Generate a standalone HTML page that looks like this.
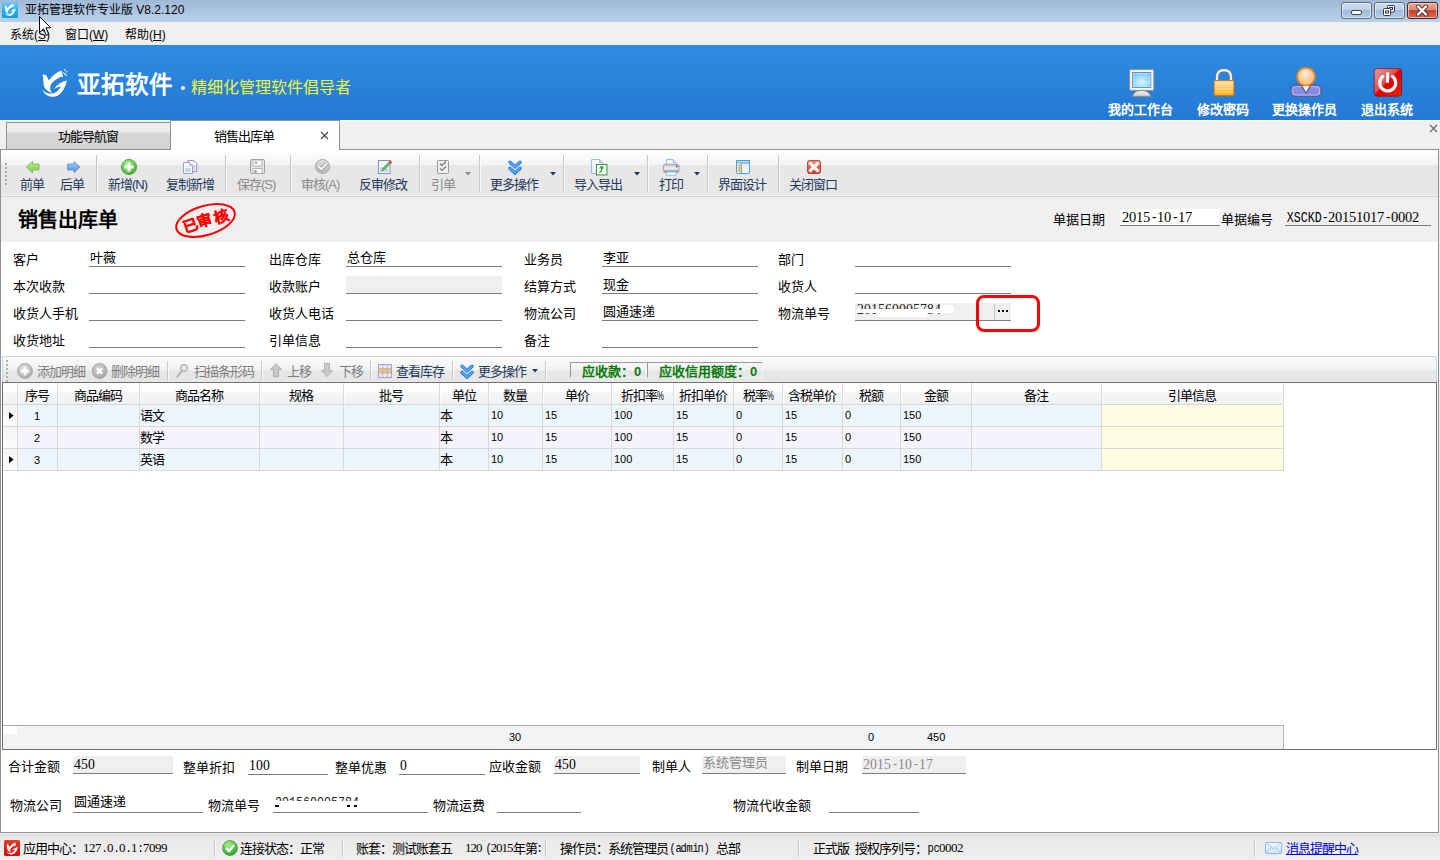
<!DOCTYPE html>
<html lang="zh-CN"><head><meta charset="utf-8">
<style>
*{margin:0;padding:0;box-sizing:border-box}
html,body{width:1440px;height:860px;overflow:hidden;background:#f0f0f0;font-family:"Liberation Sans",sans-serif;color:#000}
.a{position:absolute}
.t{position:absolute;white-space:nowrap}
.m{font-family:"Liberation Mono",monospace}
svg{overflow:visible}
</style></head><body>
<div class="a" style="left:0px;top:0px;width:1440px;height:22px;background:linear-gradient(#9fb9d7,#b9d2ea)"></div>
<svg class="a" style="left:2px;top:2px" width="16" height="16" viewBox="0 0 16 16"><defs><linearGradient id="ti" x1="0" y1="0" x2="0" y2="1"><stop offset="0" stop-color="#6cc8f4"/><stop offset=".5" stop-color="#29aef0"/><stop offset="1" stop-color="#0aa2e6"/></linearGradient></defs><rect width="16" height="16" rx="1.5" fill="url(#ti)"/><g fill="#fff" transform="translate(0.5,-1.2) scale(0.46)"><path d="M4.6,11 C6,10 7.5,10.3 8.6,12 L11,16.5 C14,12 18,8.5 23.5,6.6 L24.6,12.6 C19,14 14.5,17.5 12.6,21.5 C11.6,24 12,27 14.5,28.6 C10,28.2 6.2,25 5.6,20 C5.2,16 5.2,13 4.6,11 Z"/><path d="M4.2,25 C6,30 10,32.8 15,32.8 C21,32.8 26.5,27 28.9,16.5 C24,17.5 19,20.5 15.8,25.2 C19,23 21.2,22.3 22.8,22.4 C21,26.5 17,29.6 12.5,29.6 C9,29.6 6,28 4.2,25 Z"/></g></svg>
<div class="t" style="left:25px;top:4px;font-size:12.001px;line-height:12.001px;">亚拓管理软件专业版 V8.2.120</div>
<div class="a" style="left:1341px;top:2px;width:31px;height:17px;border:1px solid #5e6c80;border-radius:3px;background:linear-gradient(#c8d9ec 0%,#bcd0e8 45%,#9fbad8 50%,#b2cbe6 100%);box-shadow:inset 0 0 0 1px rgba(255,255,255,.55)"></div>
<div class="a" style="left:1374px;top:2px;width:31px;height:17px;border:1px solid #5e6c80;border-radius:3px;background:linear-gradient(#c8d9ec 0%,#bcd0e8 45%,#9fbad8 50%,#b2cbe6 100%);box-shadow:inset 0 0 0 1px rgba(255,255,255,.55)"></div>
<div class="a" style="left:1407px;top:2px;width:31px;height:17px;border:1px solid #5a1a1a;border-radius:3px;background:linear-gradient(#e8a698 0%,#d98a78 45%,#c2442a 50%,#d06a50 100%);box-shadow:inset 0 0 0 1px rgba(255,255,255,.55)"></div>
<div class="a" style="left:1351px;top:10px;width:11px;height:5px;background:#fff;border:1px solid #3a4556;border-radius:2px"></div>
<svg class="a" style="left:1383px;top:5px" width="12" height="11" viewBox="0 0 12 11"><rect x="4.5" y="0.5" width="7" height="6.5" rx="1" fill="#fff" stroke="#2f3846"/><rect x="6.5" y="2.5" width="3" height="2" fill="none" stroke="#2f3846"/><rect x="0.5" y="3.5" width="7" height="7" rx="1" fill="#fff" stroke="#2f3846"/><rect x="2.5" y="6" width="3" height="2" fill="none" stroke="#2f3846"/></svg>
<svg class="a" style="left:1416px;top:5px" width="12" height="11" viewBox="0 0 12 11"><path d="M2 1.5 L10 9.5 M10 1.5 L2 9.5" stroke="#4a3030" stroke-width="4" stroke-linecap="round"/><path d="M2 1.5 L10 9.5 M10 1.5 L2 9.5" stroke="#fff" stroke-width="2.4" stroke-linecap="round"/></svg>
<div class="t" style="left:10px;top:29px;font-size:12.001px;line-height:12.001px;">系统(<u>S</u>)</div>
<div class="t" style="left:65px;top:29px;font-size:12.001px;line-height:12.001px;">窗口(<u>W</u>)</div>
<div class="t" style="left:125px;top:29px;font-size:12.001px;line-height:12.001px;">帮助(<u>H</u>)</div>
<div class="a" style="left:0px;top:45px;width:1440px;height:75px;background:linear-gradient(#2e8ce0,#2479d4)"></div>
<svg class="a" style="left:38px;top:64px" width="36" height="36" viewBox="0 0 36 36"><g fill="#fff">
<path d="M4.6,11 C6,10 7.5,10.3 8.6,12 L11,16.5 C14,12 18,8.5 23.5,6.6 L24.6,12.6 C19,14 14.5,17.5 12.6,21.5 C11.6,24 12,27 14.5,28.6 C10,28.2 6.2,25 5.6,20 C5.2,16 5.2,13 4.6,11 Z"/>
<path d="M4.2,25 C6,30 10,32.8 15,32.8 C21,32.8 26.5,27 28.9,16.5 C24,17.5 19,20.5 15.8,25.2 C19,23 21.2,22.3 22.8,22.4 C21,26.5 17,29.6 12.5,29.6 C9,29.6 6,28 4.2,25 Z"/>
<circle cx="26.8" cy="5.9" r=".8"/><circle cx="28.5" cy="7.7" r=".8"/><circle cx="25.1" cy="9" r=".8"/><circle cx="26.8" cy="9.9" r=".8"/><circle cx="28" cy="11.1" r=".8"/><circle cx="24.3" cy="12.3" r=".8"/>
</g></svg>
<div class="t" style="left:77px;top:74px;font-size:23.5px;line-height:23.5px;color:#fff;font-weight:bold;letter-spacing:1px">亚拓软件</div>
<div class="a" style="left:181px;top:86px;width:4px;height:4px;background:#fff;border-radius:2px"></div>
<div class="t" style="left:191px;top:80px;font-size:16px;line-height:16px;color:#f0f53c;font-weight:500">精细化管理软件倡导者</div>
<svg class="a" style="left:1124px;top:64px" width="36" height="36" viewBox="0 0 36 36"><defs><radialGradient id="scr" cx=".5" cy=".65" r=".7"><stop offset="0" stop-color="#d8f6ff"/><stop offset="1" stop-color="#7cc8f4"/></radialGradient>
<linearGradient id="stand" x1="0" y1="0" x2="0" y2="1"><stop offset="0" stop-color="#fafafa"/><stop offset="1" stop-color="#c8c8c8"/></linearGradient></defs>
<path d="M8.6,32.4 C9.5,28.5 13,26.6 17.6,26.6 C22.2,26.6 25.7,28.5 26.6,32.4 Z" fill="url(#stand)" stroke="#8a8a8a" stroke-width=".8"/>
<rect x="5.6" y="5.6" width="24.2" height="20.8" rx="1.2" fill="#f4f4f4" stroke="#8e8e8e" stroke-width=".9"/>
<rect x="8" y="8.2" width="19.2" height="15.6" fill="#2a78b8"/>
<rect x="9" y="9.4" width="17.2" height="13.4" fill="url(#scr)" stroke="#e8f8ff" stroke-width=".6"/></svg>
<svg class="a" style="left:1206px;top:64px" width="36" height="36" viewBox="0 0 36 36"><defs><linearGradient id="lk" x1="0" y1="0" x2="0" y2="1"><stop offset="0" stop-color="#ffe0a0"/><stop offset=".5" stop-color="#ffc860"/><stop offset="1" stop-color="#ffa818"/></linearGradient></defs>
<path d="M11,17 L11,13.5 C11,8.5 13.8,6.2 18,6.2 C22.2,6.2 25,8.5 25,13.5 L25,17" fill="none" stroke="#7a7a7a" stroke-width="3.6"/>
<path d="M11,17 L11,13.5 C11,8.5 13.8,6.2 18,6.2 C22.2,6.2 25,8.5 25,13.5 L25,17" fill="none" stroke="#eeeeee" stroke-width="2.2"/>
<rect x="8" y="16.6" width="20" height="15.2" rx=".8" fill="url(#lk)" stroke="#c46a1e" stroke-width=".9"/>
<g stroke="#fff2c8" stroke-width=".6" opacity=".8"><line x1="9" y1="19" x2="27" y2="19"/><line x1="9" y1="22" x2="27" y2="22"/><line x1="9" y1="25" x2="27" y2="25"/><line x1="9" y1="28" x2="27" y2="28"/></g></svg>
<svg class="a" style="left:1288px;top:64px" width="36" height="36" viewBox="0 0 36 36"><defs><radialGradient id="hd" cx=".45" cy=".35" r=".7"><stop offset="0" stop-color="#fff4e8"/><stop offset=".5" stop-color="#ffcc98"/><stop offset="1" stop-color="#ffc080"/></radialGradient></defs>
<rect x="3" y="21.2" width="30.2" height="11" rx="4" fill="#8a8ae4" stroke="#5a5f8c" stroke-width="1.4"/>
<rect x="4.6" y="22.6" width="27" height="8.4" rx="3" fill="none" stroke="#b4c4fa" stroke-width="1"/>
<path d="M13.6,21.5 L18,29.2 L22.4,21.5 Z" fill="#f2f2f2" stroke="#4e5478" stroke-width="1.1"/>
<circle cx="18" cy="12.6" r="8.8" fill="url(#hd)" stroke="#ee8a22" stroke-width="1.8"/></svg>
<svg class="a" style="left:1370px;top:64px" width="36" height="36" viewBox="0 0 36 36"><defs><linearGradient id="pw" x1="0" y1="0" x2="1" y2="1"><stop offset="0" stop-color="#e6a0a0"/><stop offset=".45" stop-color="#e05050"/><stop offset=".5" stop-color="#dd0000"/><stop offset="1" stop-color="#e82a10"/></linearGradient></defs>
<rect x="4.2" y="4.6" width="27.4" height="27.6" rx="3.2" fill="url(#pw)" stroke="#8a1010" stroke-width=".8"/>
<path d="M12.8,12.6 A8,8 0 1 0 22.6,12.6" fill="none" stroke="#fff" stroke-width="3.2" stroke-linecap="round"/>
<line x1="17.6" y1="9.4" x2="17.6" y2="17.4" stroke="#fff" stroke-width="3" stroke-linecap="round"/></svg>
<div class="t" style="left:1108px;top:103px;font-size:13px;line-height:13px;color:#fff;font-weight:bold">我的工作台</div>
<div class="t" style="left:1197px;top:103px;font-size:13px;line-height:13px;color:#fff;font-weight:bold">修改密码</div>
<div class="t" style="left:1272px;top:103px;font-size:13px;line-height:13px;color:#fff;font-weight:bold">更换操作员</div>
<div class="t" style="left:1361px;top:103px;font-size:13px;line-height:13px;color:#fff;font-weight:bold">退出系统</div>
<div class="a" style="left:0px;top:120px;width:1440px;height:1px;background:#fbfaf4"></div>
<div class="a" style="left:6px;top:122px;width:165px;height:28px;border:1px solid #8d929a;background:linear-gradient(#f0f0f0 0,#ebebeb 9px,#d6d6d6 10px,#d4d4d4 100%)"></div>
<div class="t" style="left:58px;top:130px;font-size:13px;line-height:13px;letter-spacing:-1px;">功能导航窗</div>
<div class="a" style="left:170px;top:120px;width:170px;height:30px;border:1px solid #8d929a;border-bottom:none;background:#fff"></div>
<div class="t" style="left:214px;top:130px;font-size:13px;line-height:13px;letter-spacing:-1px;">销售出库单</div>
<svg class="a" style="left:320px;top:131px" width="9" height="9" viewBox="0 0 9 9"><path d="M1 1 L8 8 M8 1 L1 8" stroke="#444" stroke-width="1.1"/></svg>
<svg class="a" style="left:1429px;top:124px" width="9" height="9" viewBox="0 0 9 9"><path d="M1 1 L8 8 M8 1 L1 8" stroke="#5a6070" stroke-width="1.1"/></svg>
<div class="a" style="left:0px;top:149px;width:1439px;height:684px;border:1px solid #8d929a;background:#fff"></div>
<div class="a" style="left:171px;top:149px;width:168px;height:1px;background:#fff"></div>
<div class="a" style="left:1px;top:150px;width:1437px;height:15px;background:linear-gradient(#ffffff,#f3f3f3)"></div>
<div class="a" style="left:1px;top:165px;width:1437px;height:30px;background:#e7e7e7"></div>
<div class="a" style="left:1px;top:195px;width:1437px;height:1px;background:#f2f2f2"></div>
<div class="a" style="left:1px;top:196px;width:1437px;height:1px;background:#d4d4d4"></div>
<div class="a" style="left:5px;top:163px;width:2px;height:2px;background:#a8a8a8"></div>
<div class="a" style="left:5px;top:167px;width:2px;height:2px;background:#a8a8a8"></div>
<div class="a" style="left:5px;top:171px;width:2px;height:2px;background:#a8a8a8"></div>
<div class="a" style="left:5px;top:175px;width:2px;height:2px;background:#a8a8a8"></div>
<div class="a" style="left:5px;top:179px;width:2px;height:2px;background:#a8a8a8"></div>
<div class="a" style="left:5px;top:183px;width:2px;height:2px;background:#a8a8a8"></div>
<div class="a" style="left:96px;top:155px;width:1px;height:37px;background:#c8c8c8"></div>
<div class="a" style="left:97px;top:155px;width:1px;height:37px;background:#f8f8f8"></div>
<div class="a" style="left:225px;top:155px;width:1px;height:37px;background:#c8c8c8"></div>
<div class="a" style="left:226px;top:155px;width:1px;height:37px;background:#f8f8f8"></div>
<div class="a" style="left:290px;top:155px;width:1px;height:37px;background:#c8c8c8"></div>
<div class="a" style="left:291px;top:155px;width:1px;height:37px;background:#f8f8f8"></div>
<div class="a" style="left:419px;top:155px;width:1px;height:37px;background:#c8c8c8"></div>
<div class="a" style="left:420px;top:155px;width:1px;height:37px;background:#f8f8f8"></div>
<div class="a" style="left:479px;top:155px;width:1px;height:37px;background:#c8c8c8"></div>
<div class="a" style="left:480px;top:155px;width:1px;height:37px;background:#f8f8f8"></div>
<div class="a" style="left:563px;top:155px;width:1px;height:37px;background:#c8c8c8"></div>
<div class="a" style="left:564px;top:155px;width:1px;height:37px;background:#f8f8f8"></div>
<div class="a" style="left:647px;top:155px;width:1px;height:37px;background:#c8c8c8"></div>
<div class="a" style="left:648px;top:155px;width:1px;height:37px;background:#f8f8f8"></div>
<div class="a" style="left:707px;top:155px;width:1px;height:37px;background:#c8c8c8"></div>
<div class="a" style="left:708px;top:155px;width:1px;height:37px;background:#f8f8f8"></div>
<div class="a" style="left:778px;top:155px;width:1px;height:37px;background:#c8c8c8"></div>
<div class="a" style="left:779px;top:155px;width:1px;height:37px;background:#f8f8f8"></div>
<div class="t" style="left:20px;top:178px;font-size:13px;line-height:13px;color:#1e395b;letter-spacing:-1px;">前单</div>
<div class="t" style="left:60px;top:178px;font-size:13px;line-height:13px;color:#1e395b;letter-spacing:-1px;">后单</div>
<div class="t" style="left:108px;top:178px;font-size:13px;line-height:13px;color:#1e395b;letter-spacing:-1px;">新增(N)</div>
<div class="t" style="left:166px;top:178px;font-size:13px;line-height:13px;color:#1e395b;letter-spacing:-1px;">复制新增</div>
<div class="t" style="left:237px;top:178px;font-size:13px;line-height:13px;color:#8b8b8b;letter-spacing:-1px;">保存(S)</div>
<div class="t" style="left:301px;top:178px;font-size:13px;line-height:13px;color:#8b8b8b;letter-spacing:-1px;">审核(A)</div>
<div class="t" style="left:359px;top:178px;font-size:13px;line-height:13px;color:#1e395b;letter-spacing:-1px;">反审修改</div>
<div class="t" style="left:431px;top:178px;font-size:13px;line-height:13px;color:#8b8b8b;letter-spacing:-1px;">引单</div>
<div class="t" style="left:490px;top:178px;font-size:13px;line-height:13px;color:#1e395b;letter-spacing:-1px;">更多操作</div>
<div class="t" style="left:574px;top:178px;font-size:13px;line-height:13px;color:#1e395b;letter-spacing:-1px;">导入导出</div>
<div class="t" style="left:659px;top:178px;font-size:13px;line-height:13px;color:#1e395b;letter-spacing:-1px;">打印</div>
<div class="t" style="left:718px;top:178px;font-size:13px;line-height:13px;color:#1e395b;letter-spacing:-1px;">界面设计</div>
<div class="t" style="left:789px;top:178px;font-size:13px;line-height:13px;color:#1e395b;letter-spacing:-1px;">关闭窗口</div>
<svg class="a" style="left:465px;top:172px" width="6" height="4" viewBox="0 0 6 4"><path d="M0 0 L6 0 L3 3.5 Z" fill="#8b8b8b"/></svg>
<svg class="a" style="left:550px;top:172px" width="6" height="4" viewBox="0 0 6 4"><path d="M0 0 L6 0 L3 3.5 Z" fill="#1e395b"/></svg>
<svg class="a" style="left:634px;top:172px" width="6" height="4" viewBox="0 0 6 4"><path d="M0 0 L6 0 L3 3.5 Z" fill="#1e395b"/></svg>
<svg class="a" style="left:694px;top:172px" width="6" height="4" viewBox="0 0 6 4"><path d="M0 0 L6 0 L3 3.5 Z" fill="#1e395b"/></svg>
<svg class="a" style="left:26px;top:161px" width="14" height="13" viewBox="0 0 14 13"><defs><linearGradient id="ga" x1="0" y1="0" x2="0" y2="1"><stop offset="0" stop-color="#c8f0a0"/><stop offset="1" stop-color="#6cc83c"/></linearGradient></defs><path d="M0.5 6 L6.5 0.5 L6.5 3 L13 3 L13 9 L6.5 9 L6.5 11.8 Z" fill="url(#ga)" stroke="#6ab84a" stroke-width=".8"/></svg>
<svg class="a" style="left:67px;top:161px" width="14" height="13" viewBox="0 0 14 13"><defs><linearGradient id="ba" x1="0" y1="0" x2="0" y2="1"><stop offset="0" stop-color="#a8d0f8"/><stop offset="1" stop-color="#4a8ee0"/></linearGradient></defs><path d="M13 6 L7 0.5 L7 3 L0.5 3 L0.5 9 L7 9 L7 11.8 Z" fill="url(#ba)" stroke="#5a90d0" stroke-width=".8"/></svg>
<svg class="a" style="left:121px;top:159px" width="16" height="16" viewBox="0 0 16 16"><defs><radialGradient id="gp" cx=".4" cy=".3" r=".8"><stop offset="0" stop-color="#a8ec90"/><stop offset="1" stop-color="#3aa828"/></radialGradient></defs><circle cx="8" cy="8" r="7.6" fill="url(#gp)" stroke="#3c9a30" stroke-width=".8"/><path d="M8 3.5 V12.5 M3.5 8 H12.5" stroke="#fff" stroke-width="3"/></svg>
<svg class="a" style="left:183px;top:160px" width="15" height="14" viewBox="0 0 15 14"><path d="M4.6 0.6 H10.8 L13.8 3.6 V11.4 H4.6 Z" fill="#fff" stroke="#9a7cc8" stroke-width="1"/><rect x="10.6" y="5.5" width="1.6" height="4.2" fill="#c8b4e8"/><path d="M0.6 2.6 H6.8 L9.6 5.4 V13.4 H0.6 Z" fill="#fff" stroke="#8c9cc4" stroke-width="1"/><path d="M6.8 2.6 V5.4 H9.6" fill="#dfe6f4" stroke="#8c9cc4" stroke-width=".8"/><rect x="2" y="8.2" width="6" height="3.6" fill="#c4d0ec"/><line x1="2" y1="6.6" x2="6.5" y2="6.6" stroke="#c4d0ec" stroke-width=".8"/></svg>
<svg class="a" style="left:250px;top:159px" width="15" height="15" viewBox="0 0 15 15"><rect x="0.5" y="0.5" width="14" height="14" rx="1" fill="#e4e4e4" stroke="#a0a0a0"/><rect x="3" y="1" width="9" height="6" fill="#f8f8f8" stroke="#a8a8a8" stroke-width=".8"/><rect x="5" y="2.5" width="2" height="2" fill="#999"/><rect x="3" y="9.5" width="9" height="5" fill="#f8f8f8" stroke="#a8a8a8" stroke-width=".8"/><rect x="4.5" y="11" width="2" height="3" fill="#999"/></svg>
<svg class="a" style="left:315px;top:159px" width="15" height="15" viewBox="0 0 15 15"><defs><linearGradient id="gc" x1="0" y1="0" x2="0" y2="1"><stop offset="0" stop-color="#e0e0e0"/><stop offset="1" stop-color="#b8b8b8"/></linearGradient></defs><circle cx="7.5" cy="7.5" r="7" fill="url(#gc)" stroke="#a4a4a4" stroke-width="1"/><path d="M3.6 7.4 L6.4 10.2 L11.6 4.8" stroke="#8a8a8a" stroke-width="3.6" fill="none"/><path d="M3.6 7.4 L6.4 10.2 L11.6 4.8" stroke="#fafafa" stroke-width="2.2" fill="none"/></svg>
<svg class="a" style="left:378px;top:160px" width="14" height="14" viewBox="0 0 14 14"><rect x="0.5" y="0.5" width="11.5" height="13" fill="#f4f6fc" stroke="#7088c0" stroke-width=".9"/><rect x="2" y="7" width="8" height="5" fill="#c8d4f0"/><path d="M4 11 L5 8 L11.5 1.5 L13 3 L6.5 9.5 Z" fill="#6cc850" stroke="#3c8a30" stroke-width=".6"/><circle cx="12.3" cy="2.2" r="1.6" fill="#e85040"/></svg>
<svg class="a" style="left:437px;top:160px" width="12" height="14" viewBox="0 0 12 14"><rect x="0.5" y="0.5" width="11" height="13" rx="1" fill="#f0f0f0" stroke="#9a9a9a"/><path d="M3 3.5 L5 5.5 L9 1.5 M3 8.5 L5 10.5 L9 6.5" stroke="#707070" stroke-width="1.1" fill="none"/></svg>
<svg class="a" style="left:508px;top:160px" width="14" height="15" viewBox="0 0 14 15"><g fill="none" stroke-linejoin="miter"><path d="M2 2.2 L7 6.7 L12 2.2" stroke="#2f6fd0" stroke-width="3.4" stroke-linecap="round"/><path d="M2 2.2 L7 6.7 L12 2.2" stroke="#52aef4" stroke-width="1.8" stroke-linecap="round"/><path d="M2 8.4 L7 12.9 L12 8.4" stroke="#2f6fd0" stroke-width="3.4" stroke-linecap="round"/><path d="M2 8.4 L7 12.9 L12 8.4" stroke="#52aef4" stroke-width="1.8" stroke-linecap="round"/></g></svg>
<svg class="a" style="left:591px;top:159px" width="17" height="17" viewBox="0 0 17 17"><defs><linearGradient id="dc" x1="0" y1="0" x2="0" y2="1"><stop offset="0" stop-color="#ffffff"/><stop offset="1" stop-color="#dcecfc"/></linearGradient></defs><path d="M0.5 0.5 H8.5 L11.5 3.5 V14.5 H0.5 Z" fill="url(#dc)" stroke="#a8b8e4" stroke-width="1"/><path d="M8.5 0.5 V3.5 H11.5 Z" fill="#a8dcf8" stroke="#b4a4dc" stroke-width=".8"/><rect x="5.5" y="5.5" width="10.4" height="10.4" fill="#fff" stroke="#3c9c3c" stroke-width="1.1"/><path d="M8.1 9.6 Q8.6 7.2 10.7 6.8 Q12.8 7.2 13.3 9.6 Z" fill="#44aa44"/><path d="M10.8 9 C11 11.5 10.2 13 8.2 13.2" stroke="#3a9a3a" stroke-width="1.4" fill="none"/></svg>
<svg class="a" style="left:663px;top:159px" width="17" height="17" viewBox="0 0 17 17"><defs><linearGradient id="pr" x1="0" y1="0" x2="0" y2="1"><stop offset="0" stop-color="#b8b8b8"/><stop offset=".35" stop-color="#e4e4e4"/><stop offset=".6" stop-color="#ececec"/><stop offset=".8" stop-color="#b0b0b0"/><stop offset="1" stop-color="#6a6a6a"/></linearGradient></defs><path d="M3.5 0.5 H10 L12.8 3.3 V6 H3.5 Z" fill="#eef6ff" stroke="#8cc0f0" stroke-width="1"/><path d="M10 0.5 V3.3 H12.8" fill="#d0e8fc" stroke="#8cc0f0" stroke-width=".8"/><rect x="0.5" y="5.2" width="15.6" height="8.2" rx="1.8" fill="url(#pr)" stroke="#a4a4a4" stroke-width="1"/><circle cx="13.8" cy="7.5" r=".9" fill="#505050"/><rect x="3.5" y="13" width="9.6" height="3.2" fill="#fff" stroke="#8cc0f0" stroke-width="1"/></svg>
<svg class="a" style="left:736px;top:160px" width="14" height="14" viewBox="0 0 14 14"><rect x="0.5" y="0.5" width="13" height="13" rx="1" fill="#eceefa" stroke="#4aa0e8" stroke-width="1"/><rect x="0.5" y="0.5" width="13" height="2.5" fill="#bcdcf8" stroke="#4aa0e8" stroke-width="1"/><rect x="1.5" y="3.5" width="3.5" height="9.5" fill="#f8e890"/><line x1="5.3" y1="3" x2="5.3" y2="13.5" stroke="#4aa0e8"/><circle cx="3.2" cy="5.5" r=".7" fill="#e04040"/><circle cx="3.2" cy="8" r=".7" fill="#e04040"/><circle cx="3.2" cy="10.5" r=".7" fill="#e04040"/></svg>
<svg class="a" style="left:807px;top:160px" width="14" height="14" viewBox="0 0 14 14"><defs><linearGradient id="rx" x1="0" y1="0" x2="0" y2="1"><stop offset="0" stop-color="#f08a70"/><stop offset="1" stop-color="#d03820"/></linearGradient></defs><rect x="0.5" y="0.5" width="13" height="13" rx="2" fill="url(#rx)" stroke="#b83020" stroke-width=".8"/><path d="M3.6 3.6 L10.4 10.4 M10.4 3.6 L3.6 10.4" stroke="#f4f4f4" stroke-width="3.4" stroke-linecap="square"/></svg>
<div class="a" style="left:1px;top:197px;width:1437px;height:45px;background:#f0f0f0"></div>
<div class="t" style="left:18px;top:210px;font-size:20px;line-height:20px;color:#000;font-weight:bold">销售出库单</div>
<svg class="a" style="left:170px;top:198px" width="72" height="44" viewBox="0 0 72 44"><ellipse cx="35.5" cy="22.5" rx="30.3" ry="14.6" transform="rotate(-16.5 35.5 22.5)" fill="none" stroke="#ff0000" stroke-width="2"/><g fill="#ff0000" stroke="#ff0000" stroke-width=".35" text-anchor="middle" dominant-baseline="central" style="font-size:15px;font-weight:bold;font-family:'Liberation Sans',sans-serif"><text x="20" y="27.6" transform="rotate(-18 20 27.6)">已</text><text x="34.8" y="22.5" transform="rotate(-18 34.8 22.5)">审</text><text x="51" y="18.4" transform="rotate(-18 51 18.4)">核</text></g></svg>
<div class="t" style="left:1053px;top:213px;font-size:13px;line-height:13px;">单据日期</div>
<div class="a" style="left:1120px;top:209px;width:100px;height:17px;background:#fff;border-bottom:1px solid #7a7a7a"></div>
<div class="t" style="left:1122px;top:210px;font-size:14.5px;line-height:14.5px;font-family:'Liberation Serif',serif;"><span style="display:inline-block;width:7px;text-align:center">2</span><span style="display:inline-block;width:7px;text-align:center">0</span><span style="display:inline-block;width:7px;text-align:center">1</span><span style="display:inline-block;width:7px;text-align:center">5</span><span style="display:inline-block;width:7px;text-align:center;font-family:'Liberation Mono',monospace;transform:scaleX(.8)">-</span><span style="display:inline-block;width:7px;text-align:center">1</span><span style="display:inline-block;width:7px;text-align:center">0</span><span style="display:inline-block;width:7px;text-align:center;font-family:'Liberation Mono',monospace;transform:scaleX(.8)">-</span><span style="display:inline-block;width:7px;text-align:center">1</span><span style="display:inline-block;width:7px;text-align:center">7</span></div>
<div class="t" style="left:1221px;top:213px;font-size:13px;line-height:13px;">单据编号</div>
<div class="a" style="left:1285px;top:209px;width:146px;height:17px;border-bottom:1px solid #7a7a7a"></div>
<div class="t" style="left:1286px;top:210px;font-size:14.5px;line-height:14.5px;font-family:'Liberation Serif',serif;"><span style="display:inline-block;width:7px;text-align:center;font-family:'Liberation Mono',monospace;transform:scaleX(.8)">X</span><span style="display:inline-block;width:7px;text-align:center;font-family:'Liberation Mono',monospace;transform:scaleX(.8)">S</span><span style="display:inline-block;width:7px;text-align:center;font-family:'Liberation Mono',monospace;transform:scaleX(.8)">C</span><span style="display:inline-block;width:7px;text-align:center;font-family:'Liberation Mono',monospace;transform:scaleX(.8)">K</span><span style="display:inline-block;width:7px;text-align:center;font-family:'Liberation Mono',monospace;transform:scaleX(.8)">D</span><span style="display:inline-block;width:7px;text-align:center;font-family:'Liberation Mono',monospace;transform:scaleX(.8)">-</span><span style="display:inline-block;width:7px;text-align:center">2</span><span style="display:inline-block;width:7px;text-align:center">0</span><span style="display:inline-block;width:7px;text-align:center">1</span><span style="display:inline-block;width:7px;text-align:center">5</span><span style="display:inline-block;width:7px;text-align:center">1</span><span style="display:inline-block;width:7px;text-align:center">0</span><span style="display:inline-block;width:7px;text-align:center">1</span><span style="display:inline-block;width:7px;text-align:center">7</span><span style="display:inline-block;width:7px;text-align:center;font-family:'Liberation Mono',monospace;transform:scaleX(.8)">-</span><span style="display:inline-block;width:7px;text-align:center">0</span><span style="display:inline-block;width:7px;text-align:center">0</span><span style="display:inline-block;width:7px;text-align:center">0</span><span style="display:inline-block;width:7px;text-align:center">2</span></div>
<div class="t" style="left:13px;top:253px;font-size:13px;line-height:13px;">客户</div>
<div class="a" style="left:89px;top:266px;width:156px;height:1px;background:#7c7c7c"></div>
<div class="t" style="left:90px;top:251px;font-size:13px;line-height:13px;">叶薇</div>
<div class="t" style="left:269px;top:253px;font-size:13px;line-height:13px;">出库仓库</div>
<div class="a" style="left:346px;top:266px;width:156px;height:1px;background:#7c7c7c"></div>
<div class="t" style="left:347px;top:251px;font-size:13px;line-height:13px;">总仓库</div>
<div class="t" style="left:524px;top:253px;font-size:13px;line-height:13px;">业务员</div>
<div class="a" style="left:602px;top:266px;width:156px;height:1px;background:#7c7c7c"></div>
<div class="t" style="left:603px;top:251px;font-size:13px;line-height:13px;">李亚</div>
<div class="t" style="left:778px;top:253px;font-size:13px;line-height:13px;">部门</div>
<div class="a" style="left:855px;top:266px;width:156px;height:1px;background:#7c7c7c"></div>
<div class="t" style="left:13px;top:280px;font-size:13px;line-height:13px;">本次收款</div>
<div class="a" style="left:89px;top:293px;width:156px;height:1px;background:#7c7c7c"></div>
<div class="t" style="left:269px;top:280px;font-size:13px;line-height:13px;">收款账户</div>
<div class="a" style="left:346px;top:276px;width:156px;height:17px;background:#efefef"></div>
<div class="a" style="left:346px;top:293px;width:156px;height:1px;background:#7c7c7c"></div>
<div class="t" style="left:524px;top:280px;font-size:13px;line-height:13px;">结算方式</div>
<div class="a" style="left:602px;top:293px;width:156px;height:1px;background:#7c7c7c"></div>
<div class="t" style="left:603px;top:278px;font-size:13px;line-height:13px;">现金</div>
<div class="t" style="left:778px;top:280px;font-size:13px;line-height:13px;">收货人</div>
<div class="a" style="left:855px;top:293px;width:156px;height:1px;background:#7c7c7c"></div>
<div class="t" style="left:13px;top:307px;font-size:13px;line-height:13px;">收货人手机</div>
<div class="a" style="left:89px;top:320px;width:156px;height:1px;background:#7c7c7c"></div>
<div class="t" style="left:269px;top:307px;font-size:13px;line-height:13px;">收货人电话</div>
<div class="a" style="left:346px;top:320px;width:156px;height:1px;background:#7c7c7c"></div>
<div class="t" style="left:524px;top:307px;font-size:13px;line-height:13px;">物流公司</div>
<div class="a" style="left:602px;top:320px;width:156px;height:1px;background:#7c7c7c"></div>
<div class="t" style="left:603px;top:305px;font-size:13px;line-height:13px;">圆通速递</div>
<div class="t" style="left:778px;top:307px;font-size:13px;line-height:13px;">物流单号</div>
<div class="a" style="left:855px;top:303px;width:156px;height:17px;background:#efefef"></div>
<div class="a" style="left:855px;top:320px;width:156px;height:1px;background:#7c7c7c"></div>
<div class="t" style="left:13px;top:334px;font-size:13px;line-height:13px;">收货地址</div>
<div class="a" style="left:89px;top:347px;width:156px;height:1px;background:#7c7c7c"></div>
<div class="t" style="left:269px;top:334px;font-size:13px;line-height:13px;">引单信息</div>
<div class="a" style="left:346px;top:347px;width:156px;height:1px;background:#7c7c7c"></div>
<div class="t" style="left:524px;top:334px;font-size:13px;line-height:13px;">备注</div>
<div class="a" style="left:602px;top:347px;width:156px;height:1px;background:#7c7c7c"></div>
<div class="t" style="left:857px;top:303px;font-size:13.74px;line-height:13.74px;font-family:'Liberation Serif',serif;color:#222;"><span style="display:inline-block;width:7px;text-align:center">2</span><span style="display:inline-block;width:7px;text-align:center">0</span><span style="display:inline-block;width:7px;text-align:center">1</span><span style="display:inline-block;width:7px;text-align:center">5</span><span style="display:inline-block;width:7px;text-align:center">6</span><span style="display:inline-block;width:7px;text-align:center">0</span><span style="display:inline-block;width:7px;text-align:center">0</span><span style="display:inline-block;width:7px;text-align:center">0</span><span style="display:inline-block;width:7px;text-align:center">5</span><span style="display:inline-block;width:7px;text-align:center">7</span><span style="display:inline-block;width:7px;text-align:center">8</span><span style="display:inline-block;width:7px;text-align:center">4</span></div>
<div class="a" style="left:856px;top:309px;width:86px;height:4px;background:#fff"></div>
<div class="a" style="left:876px;top:313px;width:51px;height:4px;background:#fff"></div>
<div class="a" style="left:940px;top:305px;width:14px;height:8px;background:#fff;border-radius:4px"></div>
<div class="a" style="left:994px;top:303px;width:1px;height:17px;background:#c8c8c8"></div>
<div class="a" style="left:998px;top:310px;width:2px;height:2px;background:#000"></div>
<div class="a" style="left:1002px;top:310px;width:2px;height:2px;background:#000"></div>
<div class="a" style="left:1006px;top:310px;width:2px;height:2px;background:#000"></div>
<div class="a" style="left:976px;top:295px;width:64px;height:37px;border:3px solid #ff0000;border-radius:8px"></div>
<div class="a" style="left:1px;top:356px;width:1437px;height:0px;"></div>
<div class="a" style="left:2px;top:356px;width:1435px;height:27px;border:1px solid #c8d6e4;border-bottom:none;background:linear-gradient(#fbfbfb 0,#f1f1f1 13px,#e6e6e6 14px,#e6e6e6 24px,#efefef 25px)"></div>
<div class="a" style="left:6px;top:360px;width:2px;height:2px;background:#b0b0b0"></div>
<div class="a" style="left:6px;top:364px;width:2px;height:2px;background:#b0b0b0"></div>
<div class="a" style="left:6px;top:368px;width:2px;height:2px;background:#b0b0b0"></div>
<div class="a" style="left:6px;top:372px;width:2px;height:2px;background:#b0b0b0"></div>
<div class="a" style="left:6px;top:376px;width:2px;height:2px;background:#b0b0b0"></div>
<div class="a" style="left:6px;top:380px;width:2px;height:2px;background:#b0b0b0"></div>
<div class="a" style="left:167px;top:361px;width:1px;height:19px;background:#c8c8c8"></div>
<div class="a" style="left:168px;top:361px;width:1px;height:19px;background:#fafafa"></div>
<div class="a" style="left:261px;top:361px;width:1px;height:19px;background:#c8c8c8"></div>
<div class="a" style="left:262px;top:361px;width:1px;height:19px;background:#fafafa"></div>
<div class="a" style="left:370px;top:361px;width:1px;height:19px;background:#c8c8c8"></div>
<div class="a" style="left:371px;top:361px;width:1px;height:19px;background:#fafafa"></div>
<div class="a" style="left:452px;top:361px;width:1px;height:19px;background:#c8c8c8"></div>
<div class="a" style="left:453px;top:361px;width:1px;height:19px;background:#fafafa"></div>
<div class="a" style="left:545px;top:361px;width:1px;height:19px;background:#c8c8c8"></div>
<div class="a" style="left:546px;top:361px;width:1px;height:19px;background:#fafafa"></div>
<div class="t" style="left:37px;top:365px;font-size:13px;line-height:13px;color:#7d7d7d;letter-spacing:-1px;">添加明细</div>
<div class="t" style="left:111px;top:365px;font-size:13px;line-height:13px;color:#7d7d7d;letter-spacing:-1px;">删除明细</div>
<div class="t" style="left:194px;top:365px;font-size:13px;line-height:13px;color:#7d7d7d;letter-spacing:-1px;">扫描条形码</div>
<div class="t" style="left:287px;top:365px;font-size:13px;line-height:13px;color:#7d7d7d;letter-spacing:-1px;">上移</div>
<div class="t" style="left:339px;top:365px;font-size:13px;line-height:13px;color:#7d7d7d;letter-spacing:-1px;">下移</div>
<div class="t" style="left:396px;top:365px;font-size:13px;line-height:13px;color:#1e395b;letter-spacing:-1px;">查看库存</div>
<div class="t" style="left:478px;top:365px;font-size:13px;line-height:13px;color:#1e395b;letter-spacing:-1px;">更多操作</div>
<svg class="a" style="left:532px;top:369px" width="6" height="4" viewBox="0 0 6 4"><path d="M0 0 L6 0 L3 3.5 Z" fill="#1e395b"/></svg>
<svg class="a" style="left:17px;top:363px" width="16" height="16" viewBox="0 0 16 16"><defs><radialGradient id="ad" cx=".4" cy=".3" r=".8"><stop offset="0" stop-color="#e4e4e4"/><stop offset="1" stop-color="#a4a4a4"/></radialGradient></defs><circle cx="8" cy="8" r="7.4" fill="url(#ad)" stroke="#9a9a9a" stroke-width=".8"/><path d="M8 3.8 V12.2 M3.8 8 H12.2" stroke="#fff" stroke-width="2.8"/></svg>
<svg class="a" style="left:92px;top:363px" width="16" height="16" viewBox="0 0 16 16"><defs><radialGradient id="dl" cx=".4" cy=".3" r=".8"><stop offset="0" stop-color="#d4d4d4"/><stop offset="1" stop-color="#a0a0a0"/></radialGradient></defs><circle cx="7.6" cy="8" r="7.4" fill="url(#dl)" stroke="#989898" stroke-width=".8"/><path d="M5 5.4 L10.2 10.6 M10.2 5.4 L5 10.6" stroke="#fff" stroke-width="2.6"/></svg>
<svg class="a" style="left:176px;top:364px" width="12" height="14" viewBox="0 0 12 14"><circle cx="8" cy="4" r="3.4" fill="#e8e8e8" stroke="#b0b0b0" stroke-width="1.2"/><path d="M6 6.5 L1.5 12.5" stroke="#b4b4b4" stroke-width="2.2" stroke-linecap="round"/></svg>
<svg class="a" style="left:270px;top:363px" width="12" height="15" viewBox="0 0 12 15"><path d="M6 0.5 L11.5 6.5 L8.5 6.5 L8.5 13.5 L3.5 13.5 L3.5 6.5 L0.5 6.5 Z" fill="#c8c8c8" stroke="#a4a4a4" stroke-width=".8"/></svg>
<svg class="a" style="left:321px;top:363px" width="12" height="15" viewBox="0 0 12 15"><path d="M6 13.5 L11.5 7.5 L8.5 7.5 L8.5 0.5 L3.5 0.5 L3.5 7.5 L0.5 7.5 Z" fill="#c8c8c8" stroke="#a4a4a4" stroke-width=".8"/></svg>
<svg class="a" style="left:378px;top:364px" width="14" height="14" viewBox="0 0 14 14"><rect x="0.5" y="0.5" width="13" height="13" fill="#e8e8f4" stroke="#9aa0b8" stroke-width=".9"/><rect x="1" y="4.6" width="12" height="4.4" fill="#f8c070"/><path d="M4.8 0.5 V13.5 M9.2 0.5 V13.5 M0.5 4.6 H13.5 M0.5 9 H13.5" stroke="#a8a8c8" stroke-width=".7"/></svg>
<svg class="a" style="left:460px;top:364px" width="14" height="15" viewBox="0 0 14 15"><g fill="none" stroke-linejoin="miter"><path d="M2 2.2 L7 6.7 L12 2.2" stroke="#2f6fd0" stroke-width="3.4" stroke-linecap="round"/><path d="M2 2.2 L7 6.7 L12 2.2" stroke="#52aef4" stroke-width="1.8" stroke-linecap="round"/><path d="M2 8.4 L7 12.9 L12 8.4" stroke="#2f6fd0" stroke-width="3.4" stroke-linecap="round"/><path d="M2 8.4 L7 12.9 L12 8.4" stroke="#52aef4" stroke-width="1.8" stroke-linecap="round"/></g></svg>
<div class="a" style="left:570px;top:362px;width:77px;height:16px;border:1px solid;border-color:#9a9a9a #f4f4f4 #f4f4f4 #9a9a9a"></div>
<div class="a" style="left:647px;top:362px;width:116px;height:16px;border:1px solid;border-color:#9a9a9a #f4f4f4 #f4f4f4 #9a9a9a"></div>
<div class="t" style="left:582px;top:365px;font-size:13px;line-height:13px;color:#0a7a0a;font-weight:bold">应收款：0</div>
<div class="t" style="left:659px;top:365px;font-size:13px;line-height:13px;color:#0a7a0a;font-weight:bold">应收信用额度：0</div>
<div class="a" style="left:2px;top:382px;width:1435px;height:368px;border:1px solid #6e6e6e;background:#fff"></div>
<div class="a" style="left:3px;top:383px;width:1280px;height:22px;background:linear-gradient(#ffffff 0,#fcfcfc 9px,#f4f5f7 10px,#f1f2f4 100%);border-bottom:1px solid #d6d6d6"></div>
<div class="a" style="left:17px;top:383px;width:1px;height:21px;background:#dcdcdc"></div>
<div class="a" style="left:18px;top:383px;width:1px;height:21px;background:#fcfcfc"></div>
<div class="a" style="left:57px;top:383px;width:1px;height:21px;background:#dcdcdc"></div>
<div class="a" style="left:58px;top:383px;width:1px;height:21px;background:#fcfcfc"></div>
<div class="a" style="left:139px;top:383px;width:1px;height:21px;background:#dcdcdc"></div>
<div class="a" style="left:140px;top:383px;width:1px;height:21px;background:#fcfcfc"></div>
<div class="a" style="left:259px;top:383px;width:1px;height:21px;background:#dcdcdc"></div>
<div class="a" style="left:260px;top:383px;width:1px;height:21px;background:#fcfcfc"></div>
<div class="a" style="left:343px;top:383px;width:1px;height:21px;background:#dcdcdc"></div>
<div class="a" style="left:344px;top:383px;width:1px;height:21px;background:#fcfcfc"></div>
<div class="a" style="left:439px;top:383px;width:1px;height:21px;background:#dcdcdc"></div>
<div class="a" style="left:440px;top:383px;width:1px;height:21px;background:#fcfcfc"></div>
<div class="a" style="left:488px;top:383px;width:1px;height:21px;background:#dcdcdc"></div>
<div class="a" style="left:489px;top:383px;width:1px;height:21px;background:#fcfcfc"></div>
<div class="a" style="left:542px;top:383px;width:1px;height:21px;background:#dcdcdc"></div>
<div class="a" style="left:543px;top:383px;width:1px;height:21px;background:#fcfcfc"></div>
<div class="a" style="left:611px;top:383px;width:1px;height:21px;background:#dcdcdc"></div>
<div class="a" style="left:612px;top:383px;width:1px;height:21px;background:#fcfcfc"></div>
<div class="a" style="left:673px;top:383px;width:1px;height:21px;background:#dcdcdc"></div>
<div class="a" style="left:674px;top:383px;width:1px;height:21px;background:#fcfcfc"></div>
<div class="a" style="left:733px;top:383px;width:1px;height:21px;background:#dcdcdc"></div>
<div class="a" style="left:734px;top:383px;width:1px;height:21px;background:#fcfcfc"></div>
<div class="a" style="left:782px;top:383px;width:1px;height:21px;background:#dcdcdc"></div>
<div class="a" style="left:783px;top:383px;width:1px;height:21px;background:#fcfcfc"></div>
<div class="a" style="left:842px;top:383px;width:1px;height:21px;background:#dcdcdc"></div>
<div class="a" style="left:843px;top:383px;width:1px;height:21px;background:#fcfcfc"></div>
<div class="a" style="left:900px;top:383px;width:1px;height:21px;background:#dcdcdc"></div>
<div class="a" style="left:901px;top:383px;width:1px;height:21px;background:#fcfcfc"></div>
<div class="a" style="left:971px;top:383px;width:1px;height:21px;background:#dcdcdc"></div>
<div class="a" style="left:972px;top:383px;width:1px;height:21px;background:#fcfcfc"></div>
<div class="a" style="left:1101px;top:383px;width:1px;height:21px;background:#dcdcdc"></div>
<div class="a" style="left:1102px;top:383px;width:1px;height:21px;background:#fcfcfc"></div>
<div class="a" style="left:1283px;top:383px;width:1px;height:21px;background:#dcdcdc"></div>
<div class="t" style="left:17px;top:389px;width:40px;text-align:center;font-size:13px;line-height:13px;letter-spacing:-1px">序号</div>
<div class="t" style="left:57px;top:389px;width:82px;text-align:center;font-size:13px;line-height:13px;letter-spacing:-1px">商品编码</div>
<div class="t" style="left:139px;top:389px;width:120px;text-align:center;font-size:13px;line-height:13px;letter-spacing:-1px">商品名称</div>
<div class="t" style="left:259px;top:389px;width:84px;text-align:center;font-size:13px;line-height:13px;letter-spacing:-1px">规格</div>
<div class="t" style="left:343px;top:389px;width:96px;text-align:center;font-size:13px;line-height:13px;letter-spacing:-1px">批号</div>
<div class="t" style="left:439px;top:389px;width:49px;text-align:center;font-size:13px;line-height:13px;letter-spacing:-1px">单位</div>
<div class="t" style="left:488px;top:389px;width:54px;text-align:center;font-size:13px;line-height:13px;letter-spacing:-1px">数量</div>
<div class="t" style="left:542px;top:389px;width:69px;text-align:center;font-size:13px;line-height:13px;letter-spacing:-1px">单价</div>
<div class="t" style="left:611px;top:389px;width:62px;text-align:center;font-size:13px;line-height:13px;letter-spacing:-1px">折扣率<span style="display:inline-block;transform:scaleX(.6);transform-origin:0 0;width:6px">%</span></div>
<div class="t" style="left:673px;top:389px;width:60px;text-align:center;font-size:13px;line-height:13px;letter-spacing:-1px">折扣单价</div>
<div class="t" style="left:733px;top:389px;width:49px;text-align:center;font-size:13px;line-height:13px;letter-spacing:-1px">税率<span style="display:inline-block;transform:scaleX(.6);transform-origin:0 0;width:6px">%</span></div>
<div class="t" style="left:782px;top:389px;width:60px;text-align:center;font-size:13px;line-height:13px;letter-spacing:-1px">含税单价</div>
<div class="t" style="left:842px;top:389px;width:58px;text-align:center;font-size:13px;line-height:13px;letter-spacing:-1px">税额</div>
<div class="t" style="left:900px;top:389px;width:71px;text-align:center;font-size:13px;line-height:13px;letter-spacing:-1px">金额</div>
<div class="t" style="left:971px;top:389px;width:130px;text-align:center;font-size:13px;line-height:13px;letter-spacing:-1px">备注</div>
<div class="t" style="left:1101px;top:389px;width:182px;text-align:center;font-size:13px;line-height:13px;letter-spacing:-1px">引单信息</div>
<div class="a" style="left:3px;top:405px;width:14px;height:22px;background:linear-gradient(#f4f4f4,#fbfbfb)"></div>
<div class="a" style="left:17px;top:405px;width:1266px;height:22px;background:#eef6fd"></div>
<div class="a" style="left:1101px;top:405px;width:182px;height:22px;background:#fefde2"></div>
<div class="a" style="left:3px;top:426px;width:1281px;height:1px;background:#d8d8d8"></div>
<div class="a" style="left:17px;top:405px;width:1px;height:22px;background:#d8d8d8"></div>
<div class="a" style="left:57px;top:405px;width:1px;height:22px;background:#d8d8d8"></div>
<div class="a" style="left:139px;top:405px;width:1px;height:22px;background:#d8d8d8"></div>
<div class="a" style="left:259px;top:405px;width:1px;height:22px;background:#d8d8d8"></div>
<div class="a" style="left:343px;top:405px;width:1px;height:22px;background:#d8d8d8"></div>
<div class="a" style="left:439px;top:405px;width:1px;height:22px;background:#d8d8d8"></div>
<div class="a" style="left:488px;top:405px;width:1px;height:22px;background:#d8d8d8"></div>
<div class="a" style="left:542px;top:405px;width:1px;height:22px;background:#d8d8d8"></div>
<div class="a" style="left:611px;top:405px;width:1px;height:22px;background:#d8d8d8"></div>
<div class="a" style="left:673px;top:405px;width:1px;height:22px;background:#d8d8d8"></div>
<div class="a" style="left:733px;top:405px;width:1px;height:22px;background:#d8d8d8"></div>
<div class="a" style="left:782px;top:405px;width:1px;height:22px;background:#d8d8d8"></div>
<div class="a" style="left:842px;top:405px;width:1px;height:22px;background:#d8d8d8"></div>
<div class="a" style="left:900px;top:405px;width:1px;height:22px;background:#d8d8d8"></div>
<div class="a" style="left:971px;top:405px;width:1px;height:22px;background:#d8d8d8"></div>
<div class="a" style="left:1101px;top:405px;width:1px;height:22px;background:#d8d8d8"></div>
<div class="a" style="left:1283px;top:405px;width:1px;height:22px;background:#d8d8d8"></div>
<svg class="a" style="left:9px;top:412px" width="5" height="8" viewBox="0 0 5 8"><path d="M0 0 L4.6 3.6 L0 7.2 Z" fill="#000"/></svg>
<div class="t" style="left:17px;top:411px;width:40px;text-align:center;font-size:11px;line-height:11px">1</div>
<div class="t" style="left:140px;top:409px;font-size:13px;line-height:13px;letter-spacing:-1px;">语文</div>
<div class="t" style="left:440px;top:409px;font-size:13px;line-height:13px;letter-spacing:-1px;">本</div>
<div class="t" style="left:491px;top:410px;font-size:11px;line-height:11px;">10</div>
<div class="t" style="left:545px;top:410px;font-size:11px;line-height:11px;">15</div>
<div class="t" style="left:614px;top:410px;font-size:11px;line-height:11px;">100</div>
<div class="t" style="left:676px;top:410px;font-size:11px;line-height:11px;">15</div>
<div class="t" style="left:736px;top:410px;font-size:11px;line-height:11px;">0</div>
<div class="t" style="left:785px;top:410px;font-size:11px;line-height:11px;">15</div>
<div class="t" style="left:845px;top:410px;font-size:11px;line-height:11px;">0</div>
<div class="t" style="left:903px;top:410px;font-size:11px;line-height:11px;">150</div>
<div class="a" style="left:3px;top:427px;width:14px;height:22px;background:linear-gradient(#f4f4f4,#fbfbfb)"></div>
<div class="a" style="left:17px;top:427px;width:1266px;height:22px;background:#f5f3fc"></div>
<div class="a" style="left:1101px;top:427px;width:182px;height:22px;background:#fefde2"></div>
<div class="a" style="left:3px;top:448px;width:1281px;height:1px;background:#d8d8d8"></div>
<div class="a" style="left:17px;top:427px;width:1px;height:22px;background:#d8d8d8"></div>
<div class="a" style="left:57px;top:427px;width:1px;height:22px;background:#d8d8d8"></div>
<div class="a" style="left:139px;top:427px;width:1px;height:22px;background:#d8d8d8"></div>
<div class="a" style="left:259px;top:427px;width:1px;height:22px;background:#d8d8d8"></div>
<div class="a" style="left:343px;top:427px;width:1px;height:22px;background:#d8d8d8"></div>
<div class="a" style="left:439px;top:427px;width:1px;height:22px;background:#d8d8d8"></div>
<div class="a" style="left:488px;top:427px;width:1px;height:22px;background:#d8d8d8"></div>
<div class="a" style="left:542px;top:427px;width:1px;height:22px;background:#d8d8d8"></div>
<div class="a" style="left:611px;top:427px;width:1px;height:22px;background:#d8d8d8"></div>
<div class="a" style="left:673px;top:427px;width:1px;height:22px;background:#d8d8d8"></div>
<div class="a" style="left:733px;top:427px;width:1px;height:22px;background:#d8d8d8"></div>
<div class="a" style="left:782px;top:427px;width:1px;height:22px;background:#d8d8d8"></div>
<div class="a" style="left:842px;top:427px;width:1px;height:22px;background:#d8d8d8"></div>
<div class="a" style="left:900px;top:427px;width:1px;height:22px;background:#d8d8d8"></div>
<div class="a" style="left:971px;top:427px;width:1px;height:22px;background:#d8d8d8"></div>
<div class="a" style="left:1101px;top:427px;width:1px;height:22px;background:#d8d8d8"></div>
<div class="a" style="left:1283px;top:427px;width:1px;height:22px;background:#d8d8d8"></div>
<div class="t" style="left:17px;top:433px;width:40px;text-align:center;font-size:11px;line-height:11px">2</div>
<div class="t" style="left:140px;top:431px;font-size:13px;line-height:13px;letter-spacing:-1px;">数学</div>
<div class="t" style="left:440px;top:431px;font-size:13px;line-height:13px;letter-spacing:-1px;">本</div>
<div class="t" style="left:491px;top:432px;font-size:11px;line-height:11px;">10</div>
<div class="t" style="left:545px;top:432px;font-size:11px;line-height:11px;">15</div>
<div class="t" style="left:614px;top:432px;font-size:11px;line-height:11px;">100</div>
<div class="t" style="left:676px;top:432px;font-size:11px;line-height:11px;">15</div>
<div class="t" style="left:736px;top:432px;font-size:11px;line-height:11px;">0</div>
<div class="t" style="left:785px;top:432px;font-size:11px;line-height:11px;">15</div>
<div class="t" style="left:845px;top:432px;font-size:11px;line-height:11px;">0</div>
<div class="t" style="left:903px;top:432px;font-size:11px;line-height:11px;">150</div>
<div class="a" style="left:3px;top:449px;width:14px;height:22px;background:linear-gradient(#f4f4f4,#fbfbfb)"></div>
<div class="a" style="left:17px;top:449px;width:1266px;height:22px;background:#eef6fd"></div>
<div class="a" style="left:1101px;top:449px;width:182px;height:22px;background:#fefde2"></div>
<div class="a" style="left:3px;top:470px;width:1281px;height:1px;background:#d8d8d8"></div>
<div class="a" style="left:17px;top:449px;width:1px;height:22px;background:#d8d8d8"></div>
<div class="a" style="left:57px;top:449px;width:1px;height:22px;background:#d8d8d8"></div>
<div class="a" style="left:139px;top:449px;width:1px;height:22px;background:#d8d8d8"></div>
<div class="a" style="left:259px;top:449px;width:1px;height:22px;background:#d8d8d8"></div>
<div class="a" style="left:343px;top:449px;width:1px;height:22px;background:#d8d8d8"></div>
<div class="a" style="left:439px;top:449px;width:1px;height:22px;background:#d8d8d8"></div>
<div class="a" style="left:488px;top:449px;width:1px;height:22px;background:#d8d8d8"></div>
<div class="a" style="left:542px;top:449px;width:1px;height:22px;background:#d8d8d8"></div>
<div class="a" style="left:611px;top:449px;width:1px;height:22px;background:#d8d8d8"></div>
<div class="a" style="left:673px;top:449px;width:1px;height:22px;background:#d8d8d8"></div>
<div class="a" style="left:733px;top:449px;width:1px;height:22px;background:#d8d8d8"></div>
<div class="a" style="left:782px;top:449px;width:1px;height:22px;background:#d8d8d8"></div>
<div class="a" style="left:842px;top:449px;width:1px;height:22px;background:#d8d8d8"></div>
<div class="a" style="left:900px;top:449px;width:1px;height:22px;background:#d8d8d8"></div>
<div class="a" style="left:971px;top:449px;width:1px;height:22px;background:#d8d8d8"></div>
<div class="a" style="left:1101px;top:449px;width:1px;height:22px;background:#d8d8d8"></div>
<div class="a" style="left:1283px;top:449px;width:1px;height:22px;background:#d8d8d8"></div>
<svg class="a" style="left:9px;top:456px" width="5" height="8" viewBox="0 0 5 8"><path d="M0 0 L4.6 3.6 L0 7.2 Z" fill="#000"/></svg>
<div class="t" style="left:17px;top:455px;width:40px;text-align:center;font-size:11px;line-height:11px">3</div>
<div class="t" style="left:140px;top:453px;font-size:13px;line-height:13px;letter-spacing:-1px;">英语</div>
<div class="t" style="left:440px;top:453px;font-size:13px;line-height:13px;letter-spacing:-1px;">本</div>
<div class="t" style="left:491px;top:454px;font-size:11px;line-height:11px;">10</div>
<div class="t" style="left:545px;top:454px;font-size:11px;line-height:11px;">15</div>
<div class="t" style="left:614px;top:454px;font-size:11px;line-height:11px;">100</div>
<div class="t" style="left:676px;top:454px;font-size:11px;line-height:11px;">15</div>
<div class="t" style="left:736px;top:454px;font-size:11px;line-height:11px;">0</div>
<div class="t" style="left:785px;top:454px;font-size:11px;line-height:11px;">15</div>
<div class="t" style="left:845px;top:454px;font-size:11px;line-height:11px;">0</div>
<div class="t" style="left:903px;top:454px;font-size:11px;line-height:11px;">150</div>
<div class="a" style="left:3px;top:725px;width:1281px;height:24px;background:#f2f3f5;border-top:1px solid #a8a8a8;border-right:1px solid #b4b4b4"></div>
<div class="a" style="left:3px;top:726px;width:14px;height:8px;background:#fff"></div>
<div class="t" style="left:488px;top:732px;width:54px;text-align:center;font-size:11px;line-height:11px">30</div>
<div class="t" style="left:868px;top:732px;font-size:11px;line-height:11px;">0</div>
<div class="t" style="left:927px;top:732px;font-size:11px;line-height:11px;">450</div>
<div class="t" style="left:8px;top:760px;font-size:13px;line-height:13px;">合计金额</div>
<div class="a" style="left:73px;top:756px;width:100px;height:17px;background:#efefef"></div>
<div class="a" style="left:73px;top:773px;width:100px;height:1px;background:#7c7c7c"></div>
<div class="t" style="left:74px;top:758px;font-size:13.74px;line-height:13.74px;font-family:'Liberation Serif',serif;"><span style="display:inline-block;width:7px;text-align:center">4</span><span style="display:inline-block;width:7px;text-align:center">5</span><span style="display:inline-block;width:7px;text-align:center">0</span></div>
<div class="t" style="left:183px;top:761px;font-size:13px;line-height:13px;">整单折扣</div>
<div class="a" style="left:248px;top:774px;width:80px;height:1px;background:#7c7c7c"></div>
<div class="t" style="left:249px;top:759px;font-size:13.74px;line-height:13.74px;font-family:'Liberation Serif',serif;"><span style="display:inline-block;width:7px;text-align:center">1</span><span style="display:inline-block;width:7px;text-align:center">0</span><span style="display:inline-block;width:7px;text-align:center">0</span></div>
<div class="t" style="left:335px;top:761px;font-size:13px;line-height:13px;">整单优惠</div>
<div class="a" style="left:399px;top:774px;width:86px;height:1px;background:#7c7c7c"></div>
<div class="t" style="left:400px;top:759px;font-size:13.74px;line-height:13.74px;font-family:'Liberation Serif',serif;"><span style="display:inline-block;width:7px;text-align:center">0</span></div>
<div class="t" style="left:489px;top:760px;font-size:13px;line-height:13px;">应收金额</div>
<div class="a" style="left:554px;top:756px;width:86px;height:17px;background:#efefef"></div>
<div class="a" style="left:554px;top:773px;width:86px;height:1px;background:#7c7c7c"></div>
<div class="t" style="left:555px;top:758px;font-size:13.74px;line-height:13.74px;font-family:'Liberation Serif',serif;"><span style="display:inline-block;width:7px;text-align:center">4</span><span style="display:inline-block;width:7px;text-align:center">5</span><span style="display:inline-block;width:7px;text-align:center">0</span></div>
<div class="t" style="left:652px;top:760px;font-size:13px;line-height:13px;">制单人</div>
<div class="a" style="left:702px;top:756px;width:84px;height:17px;background:#efefef"></div>
<div class="a" style="left:702px;top:773px;width:84px;height:1px;background:#7c7c7c"></div>
<div class="t" style="left:703px;top:756px;font-size:13px;line-height:13px;color:#8a8a8a;">系统管理员</div>
<div class="t" style="left:796px;top:760px;font-size:13px;line-height:13px;">制单日期</div>
<div class="a" style="left:862px;top:756px;width:104px;height:17px;background:#efefef"></div>
<div class="a" style="left:862px;top:773px;width:104px;height:1px;background:#7c7c7c"></div>
<div class="t" style="left:863px;top:758px;font-size:13.74px;line-height:13.74px;font-family:'Liberation Serif',serif;color:#8a8a8a;"><span style="display:inline-block;width:7px;text-align:center">2</span><span style="display:inline-block;width:7px;text-align:center">0</span><span style="display:inline-block;width:7px;text-align:center">1</span><span style="display:inline-block;width:7px;text-align:center">5</span><span style="display:inline-block;width:7px;text-align:center;font-family:'Liberation Mono',monospace;transform:scaleX(.8)">-</span><span style="display:inline-block;width:7px;text-align:center">1</span><span style="display:inline-block;width:7px;text-align:center">0</span><span style="display:inline-block;width:7px;text-align:center;font-family:'Liberation Mono',monospace;transform:scaleX(.8)">-</span><span style="display:inline-block;width:7px;text-align:center">1</span><span style="display:inline-block;width:7px;text-align:center">7</span></div>
<div class="t" style="left:10px;top:799px;font-size:13px;line-height:13px;">物流公司</div>
<div class="a" style="left:73px;top:812px;width:130px;height:1px;background:#7c7c7c"></div>
<div class="t" style="left:74px;top:795px;font-size:13px;line-height:13px;">圆通速递</div>
<div class="t" style="left:208px;top:799px;font-size:13px;line-height:13px;">物流单号</div>
<div class="a" style="left:273px;top:812px;width:155px;height:1px;background:#7c7c7c"></div>
<div class="a" style="left:272px;top:797px;width:90px;height:4px;overflow:hidden"><div class="t" style="left:3px;top:-1px;font-size:14.06px;line-height:14.06px;font-family:'Liberation Mono',monospace;transform:scaleX(0.8298);transform-origin:0 0;color:#222">201560005784</div></div>
<div class="a" style="left:275px;top:805px;width:4px;height:2px;background:#000"></div>
<div class="a" style="left:347px;top:805px;width:3px;height:2px;background:#000"></div>
<div class="a" style="left:354px;top:805px;width:3px;height:2px;background:#000"></div>
<div class="t" style="left:433px;top:799px;font-size:13px;line-height:13px;">物流运费</div>
<div class="a" style="left:497px;top:812px;width:84px;height:1px;background:#7c7c7c"></div>
<div class="t" style="left:733px;top:799px;font-size:13px;line-height:13px;">物流代收金额</div>
<div class="a" style="left:829px;top:812px;width:90px;height:1px;background:#7c7c7c"></div>
<div class="a" style="left:0px;top:833px;width:1440px;height:27px;background:linear-gradient(#ffffff 0,#dcdcdc 1px,#e9e9e9 5px,#efefef 100%)"></div>
<svg class="a" style="left:4px;top:840px" width="16" height="16" viewBox="0 0 16 16"><defs><linearGradient id="si" x1="0" y1="0" x2="0" y2="1"><stop offset="0" stop-color="#e83a2a"/><stop offset="1" stop-color="#d40c0c"/></linearGradient></defs><rect width="16" height="16" rx="1.5" fill="url(#si)"/><g fill="#fff" transform="translate(0.6,-0.6) scale(0.46)"><path d="M4.6,11 C6,10 7.5,10.3 8.6,12 L11,16.5 C14,12 18,8.5 23.5,6.6 L24.6,12.6 C19,14 14.5,17.5 12.6,21.5 C11.6,24 12,27 14.5,28.6 C10,28.2 6.2,25 5.6,20 C5.2,16 5.2,13 4.6,11 Z"/><path d="M4.2,25 C6,30 10,32.8 15,32.8 C21,32.8 26.5,27 28.9,16.5 C24,17.5 19,20.5 15.8,25.2 C19,23 21.2,22.3 22.8,22.4 C21,26.5 17,29.6 12.5,29.6 C9,29.6 6,28 4.2,25 Z"/></g></svg>
<div class="t" style="left:23px;top:842px;font-size:13px;line-height:13px;letter-spacing:-1px;">应用中心：</div>
<div class="t" style="left:83px;top:841px;font-size:12.98px;line-height:12.98px;font-family:'Liberation Serif',serif;"><span style="display:inline-block;width:6px;text-align:center">1</span><span style="display:inline-block;width:6px;text-align:center">2</span><span style="display:inline-block;width:6px;text-align:center">7</span><span style="display:inline-block;width:6px;text-align:center;font-family:'Liberation Mono',monospace;transform:scaleX(.8)">.</span><span style="display:inline-block;width:6px;text-align:center">0</span><span style="display:inline-block;width:6px;text-align:center;font-family:'Liberation Mono',monospace;transform:scaleX(.8)">.</span><span style="display:inline-block;width:6px;text-align:center">0</span><span style="display:inline-block;width:6px;text-align:center;font-family:'Liberation Mono',monospace;transform:scaleX(.8)">.</span><span style="display:inline-block;width:6px;text-align:center">1</span><span style="display:inline-block;width:6px;text-align:center;font-family:'Liberation Mono',monospace;transform:scaleX(.8)">:</span><span style="display:inline-block;width:6px;text-align:center">7</span><span style="display:inline-block;width:6px;text-align:center">0</span><span style="display:inline-block;width:6px;text-align:center">9</span><span style="display:inline-block;width:6px;text-align:center">9</span></div>
<div class="a" style="left:214px;top:840px;width:1px;height:17px;background:#c4c4c4"></div>
<div class="a" style="left:215px;top:840px;width:1px;height:17px;background:#fafafa"></div>
<div class="a" style="left:342px;top:840px;width:1px;height:17px;background:#c4c4c4"></div>
<div class="a" style="left:343px;top:840px;width:1px;height:17px;background:#fafafa"></div>
<div class="a" style="left:545px;top:840px;width:1px;height:17px;background:#c4c4c4"></div>
<div class="a" style="left:546px;top:840px;width:1px;height:17px;background:#fafafa"></div>
<div class="a" style="left:798px;top:840px;width:1px;height:17px;background:#c4c4c4"></div>
<div class="a" style="left:799px;top:840px;width:1px;height:17px;background:#fafafa"></div>
<div class="a" style="left:1254px;top:840px;width:1px;height:17px;background:#c4c4c4"></div>
<div class="a" style="left:1255px;top:840px;width:1px;height:17px;background:#fafafa"></div>
<svg class="a" style="left:222px;top:840px" width="16" height="16" viewBox="0 0 16 16"><defs><radialGradient id="ok" cx=".4" cy=".3" r=".8"><stop offset="0" stop-color="#a8f090"/><stop offset="1" stop-color="#1c9a1c"/></radialGradient></defs><circle cx="8" cy="8" r="7.5" fill="url(#ok)" stroke="#2a8a2a" stroke-width=".6"/><path d="M4 8 L7 11 L12 5" stroke="#fff" stroke-width="2.4" fill="none"/></svg>
<div class="t" style="left:240px;top:842px;font-size:13px;line-height:13px;letter-spacing:-1px;">连接状态：正常</div>
<div class="t" style="left:356px;top:842px;font-size:13px;line-height:13px;letter-spacing:-1px;">账套：测试账套五</div>
<div class="t" style="left:465px;top:841px;font-size:12.98px;line-height:12.98px;font-family:'Liberation Serif',serif;"><span style="display:inline-block;width:5.5px;text-align:center">1</span><span style="display:inline-block;width:5.5px;text-align:center">2</span><span style="display:inline-block;width:5.5px;text-align:center">0</span></div>
<div class="t" style="left:485px;top:841px;font-size:12.98px;line-height:12.98px;font-family:'Liberation Serif',serif;"><span style="display:inline-block;width:5.5px;text-align:center;font-family:'Liberation Mono',monospace;transform:scaleX(.8)">(</span><span style="display:inline-block;width:5.5px;text-align:center">2</span><span style="display:inline-block;width:5.5px;text-align:center">0</span><span style="display:inline-block;width:5.5px;text-align:center">1</span><span style="display:inline-block;width:5.5px;text-align:center">5</span></div>
<div class="t" style="left:513px;top:842px;font-size:13px;line-height:13px;letter-spacing:-1px;">年第</div>
<div class="t" style="left:536px;top:841px;font-size:12.98px;line-height:12.98px;font-family:'Liberation Serif',serif;"><span style="display:inline-block;width:5.5px;text-align:center;font-family:'Liberation Mono',monospace;transform:scaleX(.8)">:</span></div>
<div class="t" style="left:560px;top:842px;font-size:13px;line-height:13px;letter-spacing:-1px;">操作员：系统管理员</div>
<div class="t" style="left:669px;top:841px;font-size:12.98px;line-height:12.98px;font-family:'Liberation Serif',serif;"><span style="display:inline-block;width:5.7px;text-align:center;font-family:'Liberation Mono',monospace;transform:scaleX(.8)">(</span><span style="display:inline-block;width:5.7px;text-align:center;font-family:'Liberation Mono',monospace;transform:scaleX(.8)">a</span><span style="display:inline-block;width:5.7px;text-align:center;font-family:'Liberation Mono',monospace;transform:scaleX(.8)">d</span><span style="display:inline-block;width:5.7px;text-align:center;font-family:'Liberation Mono',monospace;transform:scaleX(.8)">m</span><span style="display:inline-block;width:5.7px;text-align:center;font-family:'Liberation Mono',monospace;transform:scaleX(.8)">i</span><span style="display:inline-block;width:5.7px;text-align:center;font-family:'Liberation Mono',monospace;transform:scaleX(.8)">n</span><span style="display:inline-block;width:5.7px;text-align:center;font-family:'Liberation Mono',monospace;transform:scaleX(.8)">)</span></div>
<div class="t" style="left:716px;top:842px;font-size:13px;line-height:13px;letter-spacing:-1px;">总部</div>
<div class="t" style="left:813px;top:842px;font-size:13px;line-height:13px;letter-spacing:-1px;">正式版</div>
<div class="t" style="left:855px;top:842px;font-size:13px;line-height:13px;letter-spacing:-1px;">授权序列号：</div>
<div class="t" style="left:927px;top:841px;font-size:12.98px;line-height:12.98px;font-family:'Liberation Serif',serif;"><span style="display:inline-block;width:6px;text-align:center;font-family:'Liberation Mono',monospace;transform:scaleX(.8)">p</span><span style="display:inline-block;width:6px;text-align:center;font-family:'Liberation Mono',monospace;transform:scaleX(.8)">c</span><span style="display:inline-block;width:6px;text-align:center">0</span><span style="display:inline-block;width:6px;text-align:center">0</span><span style="display:inline-block;width:6px;text-align:center">0</span><span style="display:inline-block;width:6px;text-align:center">2</span></div>
<svg class="a" style="left:1265px;top:842px" width="17" height="12" viewBox="0 0 17 12"><defs><linearGradient id="env" x1="0" y1="0" x2="0" y2="1"><stop offset="0" stop-color="#f4faff"/><stop offset="1" stop-color="#cfe4f8"/></linearGradient></defs><rect x="0.5" y="0.5" width="16" height="11" rx="1" fill="url(#env)" stroke="#8ab8e8"/><path d="M1 1 L8.5 7 L16 1 M1 11 L6 6 M16 11 L11 6" stroke="#8ab8e8" fill="none" stroke-width=".8"/></svg>
<div class="t" style="left:1286px;top:842px;font-size:13px;line-height:13px;color:#0000ee;letter-spacing:-1px;"><u>消息提醒中心</u></div>
<svg class="a" style="left:39px;top:16px" width="13" height="21" viewBox="0 0 13 21"><path d="M0.5 0.5 L0.5 16.5 L4.5 12.8 L7.3 19.3 L9.6 18.3 L6.9 11.8 L11.8 11.8 Z" fill="#fff" stroke="#000" stroke-width="1" stroke-linejoin="miter"/></svg>
</body></html>
